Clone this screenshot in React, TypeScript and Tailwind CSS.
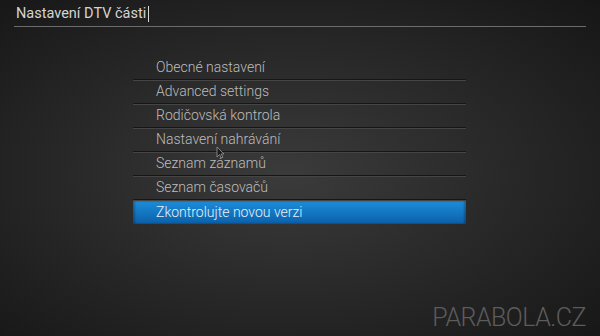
import React from "react";

const items = [
    "Obecné nastavení",
    "Advanced settings",
    "Rodičovská kontrola",
    "Nastavení nahrávání",
    "Seznam záznamů",
    "Seznam časovačů",
    "Zkontrolujte novou verzi",
];

const selected = 6;

const App: React.FC = () => {
    return (
        <div className="relative w-[600px] h-[336px] overflow-hidden bg-[radial-gradient(ellipse_at_48%_52%,#3b3b3b_0%,#2a2a2a_45%,#161616_100%)] font-['Roboto','Liberation_Sans',sans-serif]">
            <div className="mx-[14px] pt-[4px] border-b border-[#6c6c6c] h-[27px] flex items-start">
                <span className="pl-[2px] text-[14.5px] leading-[20px] text-[#d4d4d4]">Nastavení DTV části</span>
                <span className="ml-[2px] mt-[2px] w-px h-[16px] bg-[#d8d8d8]"></span>
            </div>

            <div className="ml-[133px] mt-[29px] w-[333px] flex flex-col">
                {items.map((item, i) =>
                    i === selected ? (
                        <div
                            key={item}
                            className="mt-[1px] h-[23px] flex items-center pl-[23px] text-[14px] font-light text-[#e6f0fa] bg-[linear-gradient(to_bottom,#1d8ddb,#0b5fa9)] shadow-[inset_2px_0_2px_rgba(0,0,0,0.25),inset_-2px_0_2px_rgba(0,0,0,0.25)]"
                        >
                            {item}
                        </div>
                    ) : (
                        <div
                            key={item}
                            className="h-[24px] flex items-center pl-[23px] text-[14px] font-light text-[#bdbdbd] border-b border-[#161616] shadow-[0_1px_0_#454545]"
                        >
                            {item}
                        </div>
                    )
                )}
            </div>

            <svg
                className="absolute left-[216px] top-[146px]"
                width="9"
                height="13"
                viewBox="0 0 9 13"
            >
                <path d="M1 1 L1 11 L3.5 8.5 L5.5 12 L7 11.2 L5 8 L8 8 Z" fill="#1a1a1a" stroke="#9a9a9a" strokeWidth="0.8" />
            </svg>

            <div className="absolute right-[14px] bottom-[2px] text-[25px] leading-[32px] font-light tracking-[-0.5px] text-[#5c5c5c]">
                PARABOLA.CZ
            </div>
        </div>
    );
};

export default App;
